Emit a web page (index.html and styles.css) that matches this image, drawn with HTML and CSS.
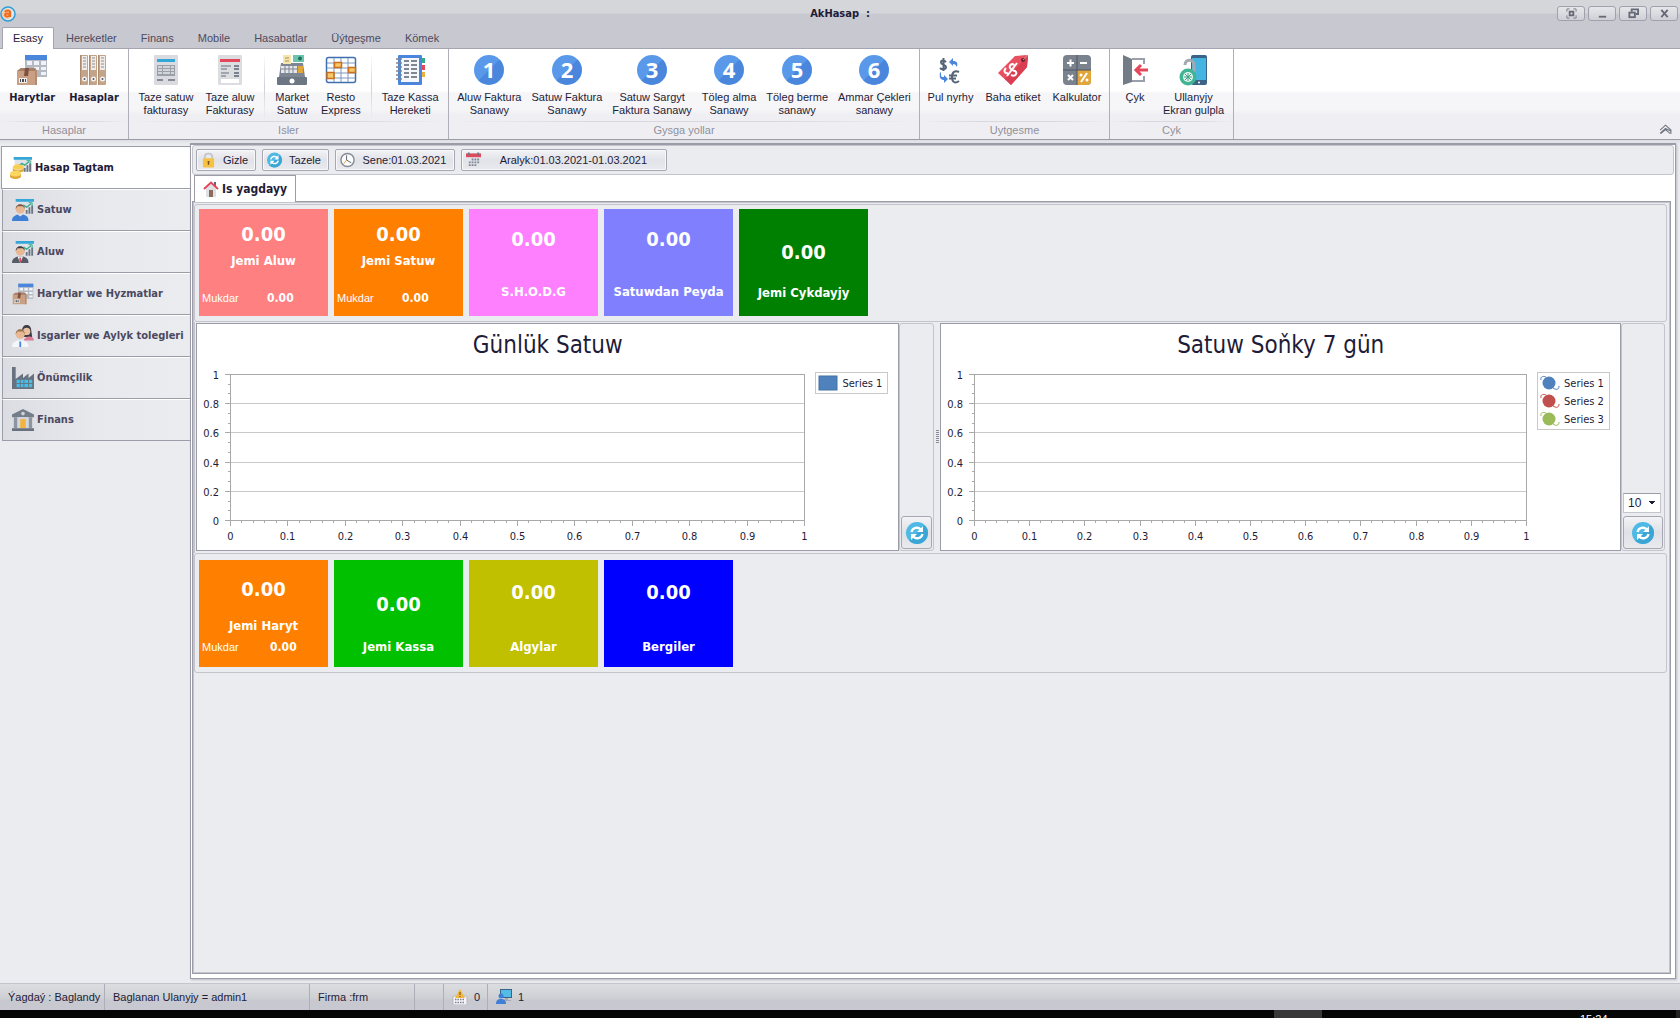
FILE: index.html
```html
<!DOCTYPE html>
<html lang="tk">
<head>
<meta charset="utf-8">
<title>AkHasap</title>
<link rel="stylesheet" href="styles.css">
<script src="charts.js" defer></script>
</head>
<body>
<svg class="sprite" aria-hidden="true">
  <symbol id="i-goods" viewBox="0 0 32 32">
    <rect x="9" y="1" width="22" height="22" fill="#b4b8bf"/>
    <path d="M11 7h5v4h-5zM18 7h5v4h-5zM25 7h5v4h-5zM18 13h5v3h-5zM25 13h5v3h-5zM25 18h5v3h-5z" fill="#eef2fa"/>
    <rect x="9" y="1" width="22" height="5" fill="#4a86dc"/>
    <path d="M1 17l4-3h14l2 3v14H1z" fill="#c9a083"/><path d="M1 17l4-3h14l2 3z" fill="#a87f68"/>
    <path d="M9 14h4l-1 8H8z" fill="#7d5240"/><path d="M21 17l-2-3v17h2z" fill="#b48b6f"/>
    <rect x="3" y="24" width="8" height="5" fill="#f3ece7"/><path d="M4 25h1v3H4zM6 25h2v3H6zM9 25h1v3H9z" fill="#444d5c"/>
  </symbol>
  <symbol id="i-binders" viewBox="0 0 32 32">
    <g id="binder"><rect x="2" y="1" width="8" height="30" rx="1" fill="#c4a488"/><rect x="2" y="1" width="1" height="30" fill="#ab8a6f"/><rect x="4" y="2" width="5" height="14" fill="#f1ece8"/><path d="M5 4h3M5 7h3M5 10h3M5 13h3" stroke="#8c8c90"/><circle cx="6.500" cy="25" r="2.500" fill="#f3f3f3"/><circle cx="6.500" cy="25" r="1" fill="#555b66"/></g>
    <use href="#binder" x="9"/><use href="#binder" x="18"/>
  </symbol>
  <symbol id="i-invoice" viewBox="0 0 32 32">
    <rect x="4" y="1" width="24" height="30" rx="1" fill="#d9dbe0"/><rect x="7" y="5" width="18" height="3" fill="#35a6d8"/>
    <rect x="7" y="11" width="18" height="11" fill="#9a9fa8"/><path d="M8 13h4M13 13h7M21 13h3M8 16h4M13 16h7M21 16h3M8 19h4M13 19h7M21 19h3" stroke="#e4e6ea" stroke-width="1.500"/>
    <path d="M7 26h6M18 26h7" stroke="#868b95" stroke-width="2"/>
  </symbol>
  <symbol id="i-receipt" viewBox="0 0 32 32">
    <rect x="4" y="1" width="24" height="30" rx="1" fill="#dcdde1"/><rect x="6" y="5" width="20" height="3" fill="#e4465a"/>
    <path d="M7 12h10M7 15h6M7 19h8M7 22h5" stroke="#8e939c" stroke-width="1.500"/><path d="M20 12h5M20 15h5M20 19h5M20 22h5" stroke="#7c828d" stroke-width="2"/><rect x="7" y="25" width="18" height="4" fill="#fff"/>
  </symbol>
  <symbol id="i-register" viewBox="0 0 32 32">
    <path d="M5 9h22l2 14H3z" fill="#7e8693"/><rect x="17" y="1" width="11" height="7" fill="#6cc4ad"/><circle cx="24" cy="4.500" r="2" fill="#20705e"/>
    <path d="M7 1h8v9H7z" fill="#f5e6ae"/><path d="M9 4h4M9 7h4" stroke="#a39257"/>
    <path d="M5 12h16v7H5z" fill="#e5e7eb"/><path d="M9 11v9M13 11v9M17 11v9M5 15h16" stroke="#7e8693"/><rect x="22" y="12" width="5" height="7" fill="#e2a63a"/>
    <rect x="1" y="23" width="30" height="8" rx="1" fill="#6d7683"/><circle cx="16" cy="27" r="2.500" fill="#fff"/>
  </symbol>
  <symbol id="i-resto" viewBox="0 0 32 32">
    <rect x="1.500" y="3.500" width="29" height="25" rx="2" fill="#fff" stroke="#3f6fae" stroke-width="1.500"/>
    <path d="M9 4v24M16 4v24M23 4v24M2 9h28M2 14h28M2 19h28M2 24h28" stroke="#7e97bd" fill="none"/>
    <path d="M9.500 8.500h7v5h-7zM23.500 13.500h7v5h-7zM2 18.500h7v6H2z" fill="#f8c96a" stroke="#c96f1d" stroke-width="1.500"/>
  </symbol>
  <symbol id="i-notebook" viewBox="0 0 32 32">
    <path d="M27 4h4v5h-4z" fill="#35ab8d"/><path d="M27 11h4v5h-4z" fill="#e4465a"/><path d="M27 18h4v5h-4z" fill="#ebb03e"/>
    <rect x="4" y="1" width="24" height="30" rx="1" fill="#4a86dc"/><rect x="7" y="4" width="18" height="24" fill="#f4f6fa"/>
    <path d="M10 7h5M17 7h6M10 11h5M17 11h6M10 15h5M17 15h6M10 19h5M17 19h6M10 23h5M17 23h6" stroke="#596170" stroke-width="1.500"/>
    <path d="M2 5h6M2 9h6M2 13h6M2 17h6M2 21h6M2 25h6" stroke="#7f8794" stroke-width="1.500"/>
  </symbol>
  <symbol id="i-disc" viewBox="0 0 32 32"><circle cx="16" cy="16" r="15" fill="#5a99ea"/><path d="M26.600 5.400A15 15 0 0 1 5.400 26.600z" fill="#4a86dc"/></symbol>
  <symbol id="i-currency" viewBox="0 0 32 32">
    <path d="M11 8C9 6 6 6 6 8.500s5 2 5 4.500-4 3-6 1M8.500 4v13" fill="none" stroke="#566577" stroke-width="2"/>
    <path d="M24 18c-4-2-7 0-7 5s3 7 7 4M14 21.500h8M14 24.500h7" fill="none" stroke="#566577" stroke-width="2"/>
    <path d="M14 8l4-4v3c4 0 5 2 4 6-1-2-2-3-4-3v2zM6 18v3c0 2 1 2 3 2v-2l4 4-4 4v-3c-3 0-5-2-4-7z" fill="#4a86dc"/>
  </symbol>
  <symbol id="i-tag" viewBox="0 0 32 32">
    <path d="M18 2l11-1 2 1-1 11-16 18L1 19z" fill="#e85062"/><path d="M31 2l-1 11-16 18-6-6z" fill="#d83d52"/><circle cx="26" cy="6" r="2" fill="#6c2630"/><path d="M26 6l5-5" stroke="#c98a90"/>
    <path d="M17 11c-2-2-5 0-4 3s5 2 6 4-1 5-5 3M20 9L10 22M9 14c-3 3-1 6 2 5" fill="none" stroke="#fff" stroke-width="2"/>
  </symbol>
  <symbol id="i-calc" viewBox="0 0 32 32">
    <rect x="2" y="1" width="28" height="30" rx="4" fill="#7a828e"/><path d="M16 16h14v11a4 4 0 0 1-4 4H16z" fill="#e2a63a"/>
    <path d="M16 1v30M2 16h28" stroke="#4d5663"/><path d="M6 9h7M9.500 5.500v7M19 9h7M7 21l5 5M12 21l-5 5M26 19l-6 9" stroke="#fff" stroke-width="2"/><circle cx="20" cy="21" r="1.500" fill="#fff"/><circle cx="26" cy="26" r="1.500" fill="#fff"/>
  </symbol>
  <symbol id="i-exit" viewBox="0 0 32 32">
    <path d="M13 5h12v22H13" fill="none" stroke="#9aa0a9" stroke-width="2"/><path d="M4 1l9 4v23l-9 3z" fill="#737b87"/>
    <path d="M25 10v12" stroke="#fff" stroke-width="4"/><path d="M29 16H19M22 11l-5 5 5 5" fill="none" stroke="#e4465a" stroke-width="3"/>
  </symbol>
  <symbol id="i-lock-screen" viewBox="0 0 32 32">
    <rect x="13" y="1" width="16" height="30" rx="2" fill="#3d6288"/><rect x="14" y="4" width="14" height="22" fill="#45b4e0"/><circle cx="21" cy="28.500" r="1" fill="#fff"/>
    <path d="M7 11c0-7 10-6 9 1v6" fill="none" stroke="#a4aab2" stroke-width="3"/><circle cx="10" cy="23" r="8.500" fill="#3fb594"/><circle cx="10" cy="23" r="5" fill="#e9f5f1"/><path d="M10 19v8M6 23h8M7 20l6 6M13 20l-6 6" stroke="#3e9f86"/>
  </symbol>
  <symbol id="i-board" viewBox="0 0 24 24">
    <rect x="5" y="0" width="19" height="16" fill="#dfe2e8"/><rect x="4" y="0" width="20" height="3" fill="#35a6d8"/>
    <path d="M15 12h2v4h-2zM18 9h2v7h-2zM21 7h2v9h-2z" fill="#6a7482"/><path d="M9 10l4-3 3 2 5-4" fill="none" stroke="#38ab8b" stroke-width="1.500"/><path d="M18 4h4v4" fill="none" stroke="#38ab8b"/>
  </symbol>
  <symbol id="i-dashboard" viewBox="0 0 24 24"><use href="#i-board" width="24" height="24"/><ellipse cx="9" cy="11" rx="6" ry="3" fill="#f8cf4e"/><path d="M3 11c0 5 12 5 12 0v3c0 4-12 4-12 0z" fill="#e2a52e"/><ellipse cx="6" cy="18" rx="6" ry="3" fill="#fbd75c"/><path d="M0 18c0 4 12 4 12 0v3c0 4-12 4-12 0z" fill="#e4a933"/></symbol>
  <symbol id="i-sales" viewBox="0 0 24 24"><use href="#i-board" width="24" height="24"/><circle cx="9" cy="11" r="5" fill="#e8b793"/><path d="M4 11c0-7 10-7 10 0l-2-3H6z" fill="#7b5741"/><path d="M0 24c0-5 4-6 6-7l3 2 3-2c3 1 6 2 6 7z" fill="#3f7fd6"/></symbol>
  <symbol id="i-purchase" viewBox="0 0 24 24"><use href="#i-board" width="24" height="24"/><circle cx="9" cy="11" r="5" fill="#e8b793"/><path d="M4 11c0-7 10-7 10 0l-2-3H6z" fill="#3c3a44"/><path d="M0 24c0-5 4-6 6-7h6c3 1 6 2 6 7z" fill="#565c68"/><path d="M6 17h6l-3 7z" fill="#fff"/><path d="M8 18h2v5H8z" fill="#e4465a"/></symbol>
  <symbol id="i-staff" viewBox="0 0 24 24"><path d="M11 6c0-8 10-8 10 0l1 7H11z" fill="#3f3b45"/><circle cx="16" cy="7" r="4" fill="#eac19f"/><path d="M13 17c0-5 11-7 11 0z" fill="#dd7b96"/><circle cx="9" cy="10" r="5" fill="#e8b793"/><path d="M4 10c0-7 10-7 10 0l-2-3H6z" fill="#99724f"/><path d="M0 24c0-5 4-6 6-7h6c3 1 6 2 6 7z" fill="#f4f6f9"/><path d="M8 18h2v6H8z" fill="#4a86dc"/></symbol>
  <symbol id="i-factory" viewBox="0 0 24 24"><path d="M0 0h4v13l8-6v5l6-5v5l6-5v17H0z" fill="#67717f"/><path d="M5 14h17v8H5z" fill="#45bfe8"/><path d="M5 18h17M9 14v8M13 14v8M18 14v8" stroke="#67717f"/></symbol>
  <symbol id="i-bank" viewBox="0 0 24 24"><path d="M12 0l12 6v3H0V6z" fill="#747e8b"/><circle cx="12" cy="5" r="2" fill="#cfd3d9"/><path d="M2 9h4v12H2zM18 9h4v12h-4z" fill="#8c95a1"/><path d="M6 9h12v12H6z" fill="#d3d7dd"/><path d="M9 11h6v10H9z" fill="#f1b43c"/><path d="M0 21h24v3H0z" fill="#67717f"/></symbol>
  <symbol id="i-padlock" viewBox="0 0 16 16"><path d="M4 7V5c0-5 8-5 8 0v2" fill="none" stroke="#c3c6cc" stroke-width="2"/><rect x="2" y="6" width="12" height="10" rx="1" fill="#f7c244"/><path d="M8 9v4M7 10h2" stroke="#6d5420" stroke-width="1.500"/></symbol>
  <symbol id="i-refresh" viewBox="0 0 24 24"><circle cx="12" cy="12" r="12" fill="#4db9e4"/><path d="M20.500 3.500a12 12 0 0 1-17 17z" fill="#3ba6d6"/><path d="M6 11c1-5 7-6 10-3M18 13c-1 5-7 6-10 3" fill="none" stroke="#fff" stroke-width="2.500"/><path d="M18.500 4.500V11H12zM5.500 19.500V13H12z" fill="#fff"/></symbol>
  <symbol id="i-clock" viewBox="0 0 16 16"><circle cx="8" cy="8" r="7" fill="#fafbfc" stroke="#858b96" stroke-width="1.500"/><path d="M7 3v5l5 3" fill="none" stroke="#59616e"/><path d="M7 8l-3 4" stroke="#e2a63a"/></symbol>
  <symbol id="i-calendar" viewBox="0 0 16 16"><rect x="0" y="1" width="16" height="15" fill="#e3e5ea"/><rect x="0" y="1" width="16" height="4" fill="#dc4a5c"/><path d="M3 0v3M13 0v3" stroke="#6e7683" stroke-width="2"/><path d="M6 7.500h8M3 10.500h11M3 13.500h8" stroke="#7f8793" stroke-width="2" stroke-dasharray="2 1"/></symbol>
  <symbol id="i-home" viewBox="0 0 16 16"><path d="M3 8l5-5 5 5v8H3z" fill="#dfe0e4"/><path d="M11 1h2v5h-2z" fill="#5f6875"/><path d="M1 8l7-6.500L15 8" fill="none" stroke="#e0475a" stroke-width="2"/><path d="M6 9h4v7H6z" fill="#8d6a59"/></symbol>
  <symbol id="i-alert" viewBox="0 0 16 16"><rect x="1" y="7" width="14" height="9" rx="1" fill="#f5f5f7" stroke="#b5b8c0"/><path d="M3 10.500h10M3 13.500h10" stroke="#7b808b" stroke-width="1.500" stroke-dasharray="1.500 1"/><path d="M8 0l5 9H3z" fill="#f3b73e"/><path d="M8 3v3M8 7v1" stroke="#5e4a1d"/></symbol>
  <symbol id="i-session" viewBox="0 0 16 16"><rect x="4" y="0" width="12" height="9" fill="#3d6288"/><rect x="5" y="1" width="10" height="7" fill="#53bde6"/><path d="M9 9h3v2h3v1H8z" fill="#a5abb4"/><circle cx="5" cy="7" r="2.500" fill="#3f7fd6"/><path d="M0 15c0-4 2-5 5-5s5 1 5 5z" fill="#3f7fd6"/></symbol>
</svg>

<header class="titlebar">
  <svg class="app-logo" viewBox="0 0 16 16" aria-hidden="true"><circle cx="8" cy="8" r="7" fill="#e2e3e8" stroke="#2f9fd6" stroke-width="1.500"/><circle cx="7" cy="8" r="5" fill="#f6c9a0"/><path d="M5 6c1-2 5-2 5 0v5M10 8c-4-1-5 0-5 1s3 3 5 0" fill="none" stroke="#ec6a1f" stroke-width="2"/></svg>
  <h1 class="app-title">AkHasap&nbsp; :</h1>
  <div class="window-buttons">
    <button aria-label="Full screen"><svg viewBox="0 0 12 12"><path d="M1 4V1h3M8 1h3v3M11 8v3H8M4 11H1V8" fill="none" stroke="#777b88"/><rect x="4" y="4" width="4" height="4" fill="none" stroke="#666a76" stroke-width="2"/></svg></button>
    <button aria-label="Minimize"><svg viewBox="0 0 12 12"><path d="M2 9.500h8" stroke="#666a76" stroke-width="2"/></svg></button>
    <button aria-label="Restore"><svg viewBox="0 0 12 12"><path d="M4 4V1.500h7v5H8.500" fill="none" stroke="#666a76" stroke-width="2"/><rect x="1.500" y="5" width="6" height="5" fill="none" stroke="#666a76" stroke-width="2"/></svg></button>
    <button aria-label="Close"><svg viewBox="0 0 12 12"><path d="M2.500 2l7 8M9.500 2l-7 8" stroke="#666a76" stroke-width="2"/></svg></button>
  </div>
</header>

<nav class="ribbon-tabs">
  <button class="ribbon-tab active">Esasy</button><button class="ribbon-tab">Hereketler</button><button class="ribbon-tab">Finans</button><button class="ribbon-tab">Mobile</button><button class="ribbon-tab">Hasabatlar</button><button class="ribbon-tab">Üýtgeşme</button><button class="ribbon-tab">Kömek</button>
</nav>

<section class="ribbon">
  <div class="group g-accounts">
    <div class="group-items">
      <button class="rib strong"><svg><use href="#i-goods"/></svg><span>Harytlar</span></button>
      <button class="rib strong"><svg><use href="#i-binders"/></svg><span>Hasaplar</span></button>
    </div>
    <div class="group-name">Hasaplar</div>
  </div>
  <div class="group g-tasks">
    <div class="group-items">
      <button class="rib"><svg><use href="#i-invoice"/></svg><span>Taze satuw<br>fakturasy</span></button>
      <button class="rib"><svg><use href="#i-receipt"/></svg><span>Taze aluw<br>Fakturasy</span></button>
      <i class="divider"></i>
      <button class="rib"><svg><use href="#i-register"/></svg><span>Market<br>Satuw</span></button>
      <button class="rib"><svg><use href="#i-resto"/></svg><span>Resto<br>Express</span></button>
      <i class="divider"></i>
      <button class="rib"><svg><use href="#i-notebook"/></svg><span>Taze Kassa<br>Hereketi</span></button>
    </div>
    <div class="group-name">Isler</div>
  </div>
  <div class="group g-shortcuts">
    <div class="group-items">
      <button class="rib"><svg><use href="#i-disc"/><text x="16" y="24">1</text></svg><span>Aluw Faktura<br>Sanawy</span></button>
      <button class="rib"><svg><use href="#i-disc"/><text x="16" y="24">2</text></svg><span>Satuw Faktura<br>Sanawy</span></button>
      <button class="rib"><svg><use href="#i-disc"/><text x="16" y="24">3</text></svg><span>Satuw Sargyt<br>Faktura Sanawy</span></button>
      <button class="rib"><svg><use href="#i-disc"/><text x="16" y="24">4</text></svg><span>Töleg alma<br>Sanawy</span></button>
      <button class="rib"><svg><use href="#i-disc"/><text x="16" y="24">5</text></svg><span>Töleg berme<br>sanawy</span></button>
      <button class="rib"><svg><use href="#i-disc"/><text x="16" y="24">6</text></svg><span>Ammar Çekleri<br>sanawy</span></button>
    </div>
    <div class="group-name">Gysga yollar</div>
  </div>
  <div class="group g-change">
    <div class="group-items">
      <button class="rib"><svg><use href="#i-currency"/></svg><span>Pul nyrhy</span></button>
      <button class="rib"><svg><use href="#i-tag"/></svg><span>Baha etiket</span></button>
      <button class="rib"><svg><use href="#i-calc"/></svg><span>Kalkulator</span></button>
    </div>
    <div class="group-name">Uytgesme</div>
  </div>
  <div class="group g-exit">
    <div class="group-items">
      <button class="rib"><svg><use href="#i-exit"/></svg><span>Çyk</span></button>
      <button class="rib"><svg><use href="#i-lock-screen"/></svg><span>Ullanyjy<br>Ekran gulpla</span></button>
    </div>
    <div class="group-name">Cyk</div>
  </div>
  <button class="collapse" aria-label="Collapse ribbon"><svg viewBox="0 0 12 10"><path d="M1 5.500L6 1l5 4.500v1L6 4 1 8.500M1 8.500h1L6 5l4 3.500h1V6" fill="none" stroke="#70747f"/></svg></button>
</section>

<div class="work">
  <nav class="sidebar">
    <button class="side active"><svg><use href="#i-dashboard"/></svg>Hasap Tagtam</button>
    <button class="side"><svg><use href="#i-sales"/></svg>Satuw</button>
    <button class="side"><svg><use href="#i-purchase"/></svg>Aluw</button>
    <button class="side"><svg><use href="#i-goods"/></svg>Harytlar we Hyzmatlar</button>
    <button class="side"><svg><use href="#i-staff"/></svg>Isgarler we Aylyk tolegleri</button>
    <button class="side"><svg><use href="#i-factory"/></svg>Önümçilik</button>
    <button class="side"><svg><use href="#i-bank"/></svg>Finans</button>
  </nav>

  <main class="frame">
    <div class="toolbar">
      <button class="tool"><svg><use href="#i-padlock"/></svg><span>Gizle</span></button>
      <button class="tool"><svg><use href="#i-refresh"/></svg><span>Tazele</span></button>
      <button class="tool date"><svg><use href="#i-clock"/></svg><span>Sene:01.03.2021</span></button>
      <button class="tool range"><svg><use href="#i-calendar"/></svg><span>Aralyk:01.03.2021-01.03.2021</span></button>
    </div>
    <div class="page-tabs"><button class="page-tab"><svg><use href="#i-home"/></svg>Is yagdayy</button></div>

    <div class="page">
      <section class="tiles">
        <article class="tile salmon high"><strong>0.00</strong><h3>Jemi Aluw</h3><p><span>Mukdar</span><b>0.00</b></p></article>
        <article class="tile orange high"><strong>0.00</strong><h3>Jemi Satuw</h3><p><span>Mukdar</span><b>0.00</b></p></article>
        <article class="tile pink"><strong>0.00</strong><h3>S.H.O.D.G</h3></article>
        <article class="tile violet"><strong>0.00</strong><h3>Satuwdan Peyda</h3></article>
        <article class="tile green low"><strong>0.00</strong><h3>Jemi Cykdayjy</h3></article>
      </section>

      <section class="charts">
        <div class="chart daily">
          <h2>Günlük Satuw</h2>
          <div class="chart-body">
            <svg class="plot" role="img" aria-label="Günlük Satuw"></svg>
            <ul class="legend"><li><svg viewBox="0 0 20 16"><rect x="1" y="1" width="18" height="14" fill="#4f81bd" stroke="#4572a7"/></svg>Series 1</li></ul>
          </div>
        </div>
        <div class="chart-side"><button class="reload" aria-label="Tazele"><svg><use href="#i-refresh"/></svg></button></div>
        <div class="splitter"><i></i></div>
        <div class="chart weekly">
          <h2>Satuw Soňky 7 gün</h2>
          <div class="chart-body">
            <svg class="plot" role="img" aria-label="Satuw Soňky 7 gün"></svg>
            <ul class="legend">
              <li><svg class="s1" viewBox="0 0 20 16"><path d="M1 5c-1-4 3-4 5-3M13 13c3 2 6 2 6-2" fill="none" stroke="currentColor"/><circle cx="9" cy="8" r="6.500" fill="currentColor"/></svg>Series 1</li>
              <li><svg class="s2" viewBox="0 0 20 16"><path d="M1 5c-1-4 3-4 5-3M13 13c3 2 6 2 6-2" fill="none" stroke="currentColor"/><circle cx="9" cy="8" r="6.500" fill="currentColor"/></svg>Series 2</li>
              <li><svg class="s3" viewBox="0 0 20 16"><path d="M1 5c-1-4 3-4 5-3M13 13c3 2 6 2 6-2" fill="none" stroke="currentColor"/><circle cx="9" cy="8" r="6.500" fill="currentColor"/></svg>Series 3</li>
            </ul>
          </div>
        </div>
        <div class="chart-side wide">
          <select aria-label="Gün sany"><option>10</option></select>
          <button class="reload" aria-label="Tazele"><svg><use href="#i-refresh"/></svg></button>
        </div>
      </section>

      <section class="tiles balance">
        <article class="tile orange stock"><strong>0.00</strong><h3>Jemi Haryt</h3><p><span>Mukdar</span><b>0.00</b></p></article>
        <article class="tile lime low"><strong>0.00</strong><h3>Jemi Kassa</h3></article>
        <article class="tile olive"><strong>0.00</strong><h3>Algylar</h3></article>
        <article class="tile blue"><strong>0.00</strong><h3>Bergiler</h3></article>
      </section>
    </div>
  </main>
</div>

<footer class="statusbar">
  <span class="cell c-state">Ýagdaý : Baglandy</span>
  <span class="cell c-user">Baglanan Ulanyjy = admin1</span>
  <span class="cell c-firm">Firma :frm</span>
  <span class="cell c-blank"></span>
  <span class="cell c-alerts"><svg><use href="#i-alert"/></svg>0</span>
  <span class="cell"><svg><use href="#i-session"/></svg>1</span>
</footer>
<div class="taskbar"><i class="task"></i><time>15:24</time></div>
</body>
</html>
```
FILE: styles.css
```css
* { box-sizing: border-box; }

:root {
  --ink: #1e1c38;
  --line: #9b9ca8;
  --soft: #c3c4cc;
  --panel: #ebecef;
  --ui: "Liberation Sans", Arial, sans-serif;
  --wide: "DejaVu Sans Condensed", "DejaVu Sans", sans-serif;
}

body {
  margin: 0;
  height: 100vh;
  display: flex;
  flex-direction: column;
  overflow: hidden;
  background: var(--panel);
  color: var(--ink);
  font: 11px/13px var(--ui);
}

button, select { font: inherit; color: inherit; margin: 0; }
button { padding: 0; border: 0; background: none; white-space: nowrap; }
h1, h2, h3, p, ul { margin: 0; padding: 0; font-size: inherit; }
.sprite { position: absolute; width: 0; height: 0; }

/* title bar */
.titlebar {
  display: grid;
  grid-template-columns: 1fr auto 1fr;
  align-items: center;
  height: 27px;
  flex: none;
  background: linear-gradient(#d5d6d9 0 13px, #c8c8d0 14px);
}
.app-logo { width: 16px; height: 16px; }
.app-title { font: bold 11px/13px var(--wide); }
.window-buttons { display: flex; justify-content: flex-end; gap: 3px; padding-right: 2px; }
.window-buttons button {
  width: 28px;
  height: 15px;
  display: grid;
  place-items: center;
  border: 1px solid #a0a1ac;
  border-radius: 3px;
  background: linear-gradient(#e6e7ea, #cfd0d6);
}
.window-buttons svg { width: 11px; height: 11px; }

/* ribbon */
.ribbon-tabs { display: flex; flex: none; height: 22px; padding-left: 2px; background: #c8c8d0; border-bottom: 1px solid #a4a5b0; }
.ribbon-tab { height: 22px; padding: 0 12px; color: #4c4b5f; }
.ribbon-tab.active { padding: 0 10px; background: #fff; color: var(--ink); border: 1px solid #a4a5b0; border-bottom: 0; border-radius: 2px 2px 0 0; }
.ribbon {
  display: flex;
  flex: none;
  height: 91px;
  background: linear-gradient(#fff 0 42px, #f6f6f8 44px 60px, #efeff3 66px);
  border-bottom: 1px solid var(--line);
}
.group { display: flex; flex-direction: column; border-right: 1px solid #aeafb9; }
.g-accounts { width: 129px; }
.g-tasks { width: 320px; }
.g-shortcuts { width: 471px; }
.g-change { width: 190px; }
.g-exit { width: 124px; }
.group-items { display: flex; justify-content: center; height: 73px; padding-top: 5px; }
.group-name { color: #8f909b; text-align: center; line-height: 18px; background: linear-gradient(90deg, transparent, #d8d8de 30% 70%, transparent) top / 100% 1px no-repeat; }
.rib { display: flex; flex-direction: column; align-items: center; padding: 0 6px; gap: 5px; }
.rib svg { width: 32px; height: 32px; flex: none; }
.rib text { fill: #fff; font: bold 22px "Open Sans", sans-serif; text-anchor: middle; }
.g-shortcuts .rib { padding: 0 5px; }
.strong { padding: 0 7px; font: bold 11px/13px var(--wide); }
.divider { width: 1px; margin: 0 4px; background: linear-gradient(transparent, #d0d0d8, transparent); }
.collapse { margin: auto 8px 4px auto; }
.collapse svg { display: block; width: 13px; height: 11px; }

/* working area */
.work { display: flex; flex: 1; min-height: 0; padding: 3px 4px 4px 1px; background: linear-gradient(#dcdde2, var(--panel) 4px); }
.sidebar { display: flex; flex-direction: column; flex: none; width: 189px; padding-top: 3px; }
.side {
  display: flex;
  align-items: center;
  gap: 3px;
  height: 42px;
  margin-left: 1px;
  padding-left: 9px;
  border: 1px solid var(--line);
  border-top-color: #fff;
  border-right: 0;
  background: linear-gradient(90deg, #dcdde2, #e8e9ed 50%, var(--panel));
  color: #4a4961;
  font: bold 11px/14px var(--wide);
}
.side svg { width: 22px; height: 22px; flex: none; }
.side.active { height: 43px; margin-left: 0; padding-left: 8px; border-top-color: var(--line); background: #fff; color: var(--ink); }
.frame {
  display: flex;
  flex-direction: column;
  flex: 1;
  min-width: 0;
  padding: 0 4px 4px 1px;
  border: 1px solid var(--line);
  border-top-width: 2px;
  background: #fff;
  box-shadow: 1px 1px 2px #b9bac4;
}
.toolbar { display: flex; align-items: flex-start; gap: 6px; height: 30px; flex: none; margin-right: -3px; padding: 3px; background: var(--panel); border: 1px solid var(--soft); border-radius: 3px; }
.tool {
  display: flex;
  align-items: center;
  height: 22px;
  padding: 0 4px;
  border: 1px solid #a6a7b2;
  border-radius: 2px;
  background: linear-gradient(#f3f3f6, #e2e3e8 50%, #e9eaee);
  box-shadow: inset 0 0 0 1px #f8f8fa;
}
.tool svg { width: 15px; height: 16px; flex: none; }
.tool span { flex: 1; padding: 0 3px 0 7px; }
.tool.date { width: 120px; }
.tool.range { width: 206px; }
.page-tabs { height: 26px; flex: none; padding-left: 2px; }
.page-tab { display: flex; align-items: center; gap: 3px; height: 27px; padding: 0 8px; border: 1px solid var(--line); border-bottom: 0; background: #fff; font: bold 12px/14px var(--wide); position: relative; }
.page-tab svg { width: 16px; height: 16px; }
.page { flex: 1; min-height: 0; padding: 2px 3px 0 1px; border: 1px solid var(--line); background: var(--panel); box-shadow: inset 0 0 0 1px var(--soft); }

/* tiles */
.tiles { display: flex; gap: 6px; height: 118px; padding: 4px; border: 1px solid var(--soft); border-radius: 3px; }
.tile { display: flex; flex-direction: column; align-items: center; width: 129px; height: 107px; padding: 18px 0 16px; color: #fff; }
.tile strong { font: bold 20px/24px var(--wide); }
.tile h3 { margin-top: auto; font: bold 13px/16px var(--wide); }
.tile p { display: flex; align-self: stretch; margin-top: auto; padding-left: 3px; line-height: 16px; }
.tile p span { width: 65px; }
.tile p b { font: bold 12px/16px var(--wide); }
.tile.high { padding: 13px 0 10px; }
.tile.high h3 { margin-top: 7px; }
.tile.low { padding: 31px 0 15px; }
.balance { height: 120px; padding-top: 6px; }
.balance .tile { padding: 20px 0 12px; }
.balance .stock { padding-top: 17px; }
.balance .low { padding-top: 32px; }
.balance .tile p { margin-top: 5px; }
.balance .tile p span { width: 68px; }
.salmon { background: #ff8080; }
.orange { background: #ff8000; }
.pink { background: #ff80ff; }
.violet { background: #8080ff; }
.green { background: #008000; }
.lime { background: #00c000; }
.olive { background: #c0c000; }
.blue { background: #0000ff; }

/* charts */
.charts { display: flex; height: 231px; padding: 1px 2px 2px 1px; border-left: 1px solid var(--soft); }
.chart { min-width: 0; background: #fff; border: 1px solid var(--line); font-family: var(--wide); }
.daily { flex: 704 1 0; }
.weekly { flex: 681 1 0; }
.chart h2 { font: 24px/28px var(--wide); text-align: center; padding: 7px 0 0; height: 48px; }
.chart-body { display: flex; align-items: flex-start; gap: 10px; padding: 2px 10px 0 33px; }
.plot { flex: 1; min-width: 0; height: 147px; overflow: visible; shape-rendering: crispEdges; }
.plot text { fill: var(--ink); font-size: 11px; }
.plot .edge { stroke: #a9a9a9; }
.plot .rule { stroke: #c9c9c9; }
.x-label { text-anchor: middle; }
.y-label { text-anchor: end; }
.legend { width: 73px; margin-top: -2px; padding: 1px 2px; border: 1px solid #c9c9c9; list-style: none; white-space: nowrap; }
.legend li { display: flex; align-items: center; gap: 4px; height: 18px; }
.legend svg { width: 20px; height: 16px; flex: none; }
.s1 { color: #4f81bd; }
.s2 { color: #c0504d; }
.s3 { color: #9bbb59; }
.chart-side { display: flex; flex-direction: column; justify-content: flex-end; flex: none; width: 35px; gap: 3px; padding: 1px; border: 1px solid var(--soft); border-radius: 3px; }
.chart-side.wide { width: 44px; }
.reload { display: grid; place-items: center; height: 33px; border: 1px solid #a6a7b2; border-radius: 3px; background: linear-gradient(#f3f3f6, #e0e1e6 50%, #e9eaee); }
.reload svg { width: 22px; height: 22px; }
.chart-side select {
  appearance: none;
  width: 38px;
  height: 20px;
  padding: 0 4px;
  border: 1px solid var(--soft);
  border-top-color: var(--line);
  border-radius: 0;
  background:
    linear-gradient(to bottom right, var(--ink) 50%, transparent 0) right 4px center / 4px 4px no-repeat,
    linear-gradient(to bottom left, var(--ink) 50%, transparent 0) right 8px center / 4px 4px no-repeat,
    #fff;
  font-size: 12px;
}
.splitter { display: flex; align-items: center; justify-content: center; flex: none; width: 6px; }
.splitter i { width: 3px; height: 14px; background: repeating-linear-gradient(#8a8b96 0 1px, transparent 1px 2px); }

/* status bar */
.statusbar { display: flex; flex: none; height: 27px; border-top: 1px solid var(--soft); background: linear-gradient(#dcdde0, #cfd0d4 14px, #c8c8d0 16px); }
.cell { display: flex; align-items: center; gap: 6px; padding-left: 8px; border-right: 1px solid #adaeb8; white-space: nowrap; }
.cell:last-child { border: 0; }
.cell svg { width: 16px; height: 16px; }
.c-state { width: 105px; }
.c-user { width: 205px; }
.c-firm { width: 105px; }
.c-blank { width: 29px; }
.c-alerts { width: 44px; }

/* system task bar peeking in below the window */
.taskbar { display: flex; flex: none; height: 8px; overflow: hidden; background: #050505; color: #fff; border-right: 4px solid #222; }
.task { width: 48px; margin-left: auto; background: #383838; }
.taskbar time { width: 354px; padding: 3px 0 0 258px; font-size: 11px; }
```
FILE: charts.js
```js
// Draws the empty 0..1 axes of each chart to fit the space it is given.
const NS = 'http://www.w3.org/2000/svg';

function add(parent, name, attrs, text) {
  const el = document.createElementNS(NS, name);
  for (const key in attrs) el.setAttribute(key, attrs[key]);
  if (text !== undefined) el.textContent = text;
  parent.appendChild(el);
}

const tick = (n) => String(Math.round(n * 10) / 10);

function draw(plot) {
  plot.replaceChildren();
  const box = plot.getBoundingClientRect();
  const w = Math.round(box.width) - 1;
  const h = Math.round(box.height) - 1;
  const at = (v) => Math.round(v) + 0.5;
  const line = (cls, x1, y1, x2, y2) => add(plot, 'line', { class: cls, x1, y1, x2, y2 });

  for (let i = 0; i <= 15; i++) {
    const y = at(h - (h * i) / 15);
    const major = i % 3 === 0;
    line('edge', major ? -5 : -2, y, 0, y);
    if (major) {
      line(i % 15 ? 'rule' : 'edge', 0, y, w, y);
      add(plot, 'text', { class: 'y-label', x: -11, y: y + 4 }, tick(i / 15));
    }
  }
  for (let i = 0; i <= 50; i++) {
    const x = at((w * i) / 50);
    const major = i % 5 === 0;
    line('edge', x, h, x, h + (major ? 6 : 3));
    if (major) add(plot, 'text', { class: 'x-label', x, y: h + 20 }, tick(i / 50));
  }
  line('edge', 0.5, 0, 0.5, h);
  line('edge', w + 0.5, 0, w + 0.5, h);
}

const drawAll = () => document.querySelectorAll('.plot').forEach(draw);
drawAll();
window.addEventListener('resize', drawAll);
```
